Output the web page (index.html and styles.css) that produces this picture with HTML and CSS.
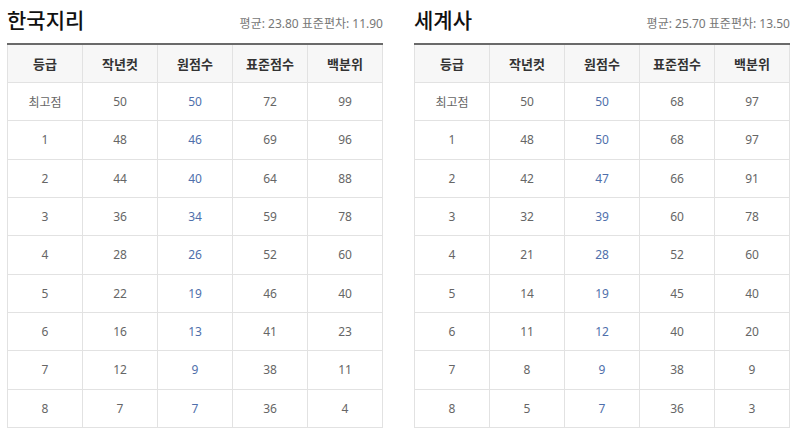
FILE: index.html
```html
<!DOCTYPE html>
<html lang="ko">
<head>
<meta charset="utf-8">
<link rel="stylesheet" href="styles.css">
</head>
<body>
<div class="page">
  <section class="subject">
    <div class="head">
      <h2 class="title">한국지리</h2>
      <span class="stats">평균: 23.80 표준편차: 11.90</span>
    </div>
    <table class="grade">
      <thead>
        <tr><th>등급</th><th>작년컷</th><th>원점수</th><th>표준점수</th><th>백분위</th></tr>
      </thead>
      <tbody>
        <tr><td>최고점</td><td>50</td><td class="raw">50</td><td>72</td><td>99</td></tr>
        <tr><td>1</td><td>48</td><td class="raw">46</td><td>69</td><td>96</td></tr>
        <tr><td>2</td><td>44</td><td class="raw">40</td><td>64</td><td>88</td></tr>
        <tr><td>3</td><td>36</td><td class="raw">34</td><td>59</td><td>78</td></tr>
        <tr><td>4</td><td>28</td><td class="raw">26</td><td>52</td><td>60</td></tr>
        <tr><td>5</td><td>22</td><td class="raw">19</td><td>46</td><td>40</td></tr>
        <tr><td>6</td><td>16</td><td class="raw">13</td><td>41</td><td>23</td></tr>
        <tr><td>7</td><td>12</td><td class="raw">9</td><td>38</td><td>11</td></tr>
        <tr><td>8</td><td>7</td><td class="raw">7</td><td>36</td><td>4</td></tr>
      </tbody>
    </table>
  </section>
  <section class="subject">
    <div class="head">
      <h2 class="title">세계사</h2>
      <span class="stats">평균: 25.70 표준편차: 13.50</span>
    </div>
    <table class="grade">
      <thead>
        <tr><th>등급</th><th>작년컷</th><th>원점수</th><th>표준점수</th><th>백분위</th></tr>
      </thead>
      <tbody>
        <tr><td>최고점</td><td>50</td><td class="raw">50</td><td>68</td><td>97</td></tr>
        <tr><td>1</td><td>48</td><td class="raw">50</td><td>68</td><td>97</td></tr>
        <tr><td>2</td><td>42</td><td class="raw">47</td><td>66</td><td>91</td></tr>
        <tr><td>3</td><td>32</td><td class="raw">39</td><td>60</td><td>78</td></tr>
        <tr><td>4</td><td>21</td><td class="raw">28</td><td>52</td><td>60</td></tr>
        <tr><td>5</td><td>14</td><td class="raw">19</td><td>45</td><td>40</td></tr>
        <tr><td>6</td><td>11</td><td class="raw">12</td><td>40</td><td>20</td></tr>
        <tr><td>7</td><td>8</td><td class="raw">9</td><td>38</td><td>9</td></tr>
        <tr><td>8</td><td>5</td><td class="raw">7</td><td>36</td><td>3</td></tr>
      </tbody>
    </table>
  </section>
</div>
</body>
</html>
```

FILE: styles.css
```css
html, body {
  margin: 0;
  padding: 0;
  background: #fff;
}
body {
  font-family: "Noto Sans", "Noto Sans CJK KR", sans-serif;
  color: #333;
}
.page {
  display: flex;
  gap: 31px;
  padding: 0 0 0 7px;
}
.subject {
  width: 376px;
}
.head {
  display: flex;
  justify-content: space-between;
  align-items: baseline;
  height: 43px;
}
.title {
  margin: 0;
  font-family: "Noto Sans CJK KR", sans-serif;
  font-size: 21px;
  font-weight: 500;
  line-height: 38px;
  color: #111;
}
.stats {
  font-size: 12px;
  color: #777;
  font-family: "Noto Sans", "Noto Sans CJK KR", sans-serif;
}
.grade {
  width: 100%;
  border-collapse: collapse;
  table-layout: fixed;
  border-top: 2px solid #6a6a6a;
}
.grade th, .grade td {
  border: 1px solid #e2e2e2;
  text-align: center;
  padding: 0;
}
.grade th {
  height: 37px;
  background: #f7f7f7;
  font-family: "Noto Sans CJK KR", sans-serif;
  font-size: 13px;
  font-weight: 700;
  color: #333;
}
.grade td {
  height: 37.33px;
  font-size: 12px;
  color: #666;
}
.grade td.raw {
  color: #4f6fab;
}
```
